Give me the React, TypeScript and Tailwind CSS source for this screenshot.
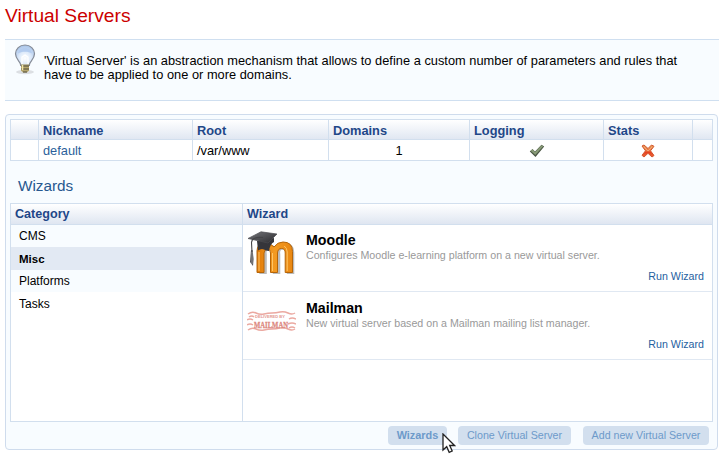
import React from "react";

const headGradient = "bg-linear-to-b from-white to-[#dfe6f1]";

function Bulb() {
  return (
    <svg width="22" height="32" viewBox="0 0 22 32" className="block">
      <defs>
        <radialGradient id="glass" cx="50%" cy="65%" r="65%">
          <stop offset="0" stopColor="#ffffff" />
          <stop offset="0.5" stopColor="#dce9fa" />
          <stop offset="1" stopColor="#a3c0e6" />
        </radialGradient>
      </defs>
      <ellipse cx="11" cy="28" rx="9" ry="2.2" fill="#dcdfe3" />
      <path d="M11 1C5.500 1 1.500 5 1.500 9.800c0 4 2.200 6 4.100 8.500.8 1.100 1 1.700 1 3h8.800c0-1.300.2-1.900 1-3 1.900-2.500 4.100-4.500 4.100-8.500C20.500 5 16.500 1 11 1z" fill="url(#glass)" stroke="#858b96" strokeWidth="1.200" />
      <path d="M4 9.500C5 2.300 17 2.300 18 9.500c-3-2.500-11-2.500-14 0z" fill="#b3ccef" />
      <path d="M8 20V13l3-2 3 2v7" fill="none" stroke="#fff" strokeWidth="1.200" />
      <path d="M7 20.500h8v6l-2 2H9l-2-2z" fill="#b5a66d" />
      <path d="M7 22h8M7 25h8M9 28h4" stroke="#4e4a3e" strokeWidth="1.200" />
      <path d="M8.500 21v5" stroke="#f2e6a8" strokeWidth="1.500" />
    </svg>
  );
}

function Check() {
  return (
    <svg width="16" height="14" viewBox="0 0 16 14" className="block">
      <path d="M.8 7.500L3.500 5 6 7.500 12.500.8 15.200 2.500 6.500 13z" fill="#4a5544" />
      <path d="M1.500 6.800L3.500 5.300 6 8 12.500 1.200 14.300 2.200 6.300 11z" fill="#879a76" />
    </svg>
  );
}

function Cross() {
  return (
    <svg width="14" height="14" viewBox="0 0 14 14" className="block">
      <defs>
        <linearGradient id="cross" x2="0" y2="1">
          <stop offset="0" stopColor="#e8a25c" />
          <stop offset="0.5" stopColor="#e8743d" />
          <stop offset="0.600" stopColor="#e5401f" />
          <stop offset="1" stopColor="#ec6a3c" />
        </linearGradient>
      </defs>
      <path d="M1 2L3 1 7 4.500 10.500 1 13 2.300 9.500 6.800 13 11.500 11 13 7 9.300 3 13 1 11.300 4.500 6.800z" fill="url(#cross)" stroke="#d4572f" strokeWidth="1" />
      <path d="M3 3l4 4 4-4" fill="none" stroke="#f5b184" strokeWidth=".8" />
    </svg>
  );
}

function MoodleLogo() {
  return (
    <svg width="49" height="46" viewBox="0 0 49 46" className="block">
      <defs>
        <linearGradient id="orange" x2="1" y2="0">
          <stop offset="0" stopColor="#e17b08" />
          <stop offset="0.500" stopColor="#f39a22" />
          <stop offset="1" stopColor="#e98711" />
        </linearGradient>
        <linearGradient id="cap" x2="1" y2="1">
          <stop offset="0" stopColor="#77777b" />
          <stop offset="1" stopColor="#29292d" />
        </linearGradient>
      </defs>
      <path d="M10.500 42V20q0-8 8.500-8 5 0 8.500 4 3.500-5 9-5 9 0 9 9.500V42h-7.500V22q0-4.500-3.700-4.500T31.500 22v20H24V22q0-4-3.500-4T18 22v20z" fill="#555" opacity=".4" transform="translate(1.800 2)" />
      <path d="M10 42.500V21q0-8 8.500-8 5 0 8.500 4 3.500-5 9-5 9.500 0 9.500 9.500v21h-7.300V23q0-4.500-3.700-4.500T30.500 23v19.500h-7V23q0-4-3-4T17 23v19.500z" fill="url(#orange)" stroke="#b66508" strokeWidth="1" />
      <path d="M12 41V22M25.500 41V23M40.200 41V22q0-4-3-6" fill="none" stroke="#ffc566" strokeWidth="1" />
      <path d="M10 11l1 9.500q4-3 8 0l3 .5q1-7 5-9V8z" fill="#35353a" />
      <path d="M1 8.500L14 1.800l16 2.200-9 9z" fill="url(#cap)" stroke="#4b4b4f" strokeWidth=".7" />
      <path d="M16 7.500Q5 6.500 4.500 12.500L5 22" fill="none" stroke="#454548" strokeWidth="1.100" />
      <path d="M4 20l-1 12 3 4 .6-7-1-9z" fill="#55555a" />
      <path d="M5 22v12" stroke="#aaa" strokeWidth=".7" />
    </svg>
  );
}

function MailmanLogo() {
  return (
    <svg width="49" height="23" viewBox="0 0 49 23" className="block">
      <g fill="none" stroke="#eba9a1" strokeWidth="1.500">
        <path d="M1 4q4-3 8-1t8 1 8-1 8-1 8 1 7 0" />
        <path d="M0 10q3-2 6 0M0 15q3-2 6 0M42 9q3-2 7 0M41 14q4-2 8 0" />
        <path d="M1 20q4-3 8-1t8 1 8-1 8-1 8 1 7 0" />
        <path d="M2 7q3-2 5 0M42 18q3-2 6 0" />
      </g>
      <text x="8" y="7.500" textLength="30" lengthAdjust="spacingAndGlyphs" fontSize="3.500" className="font-['Liberation_Sans',sans-serif] font-bold" fill="#e39a92">DELIVERED BY</text>
      <text x="7" y="17.500" textLength="34" lengthAdjust="spacingAndGlyphs" fontSize="8.500" className="font-['Liberation_Serif',serif] font-bold" fill="#dc8880" stroke="#dc8880" strokeWidth=".3">MAILMAN</text>
    </svg>
  );
}

function Cursor() {
  return (
    <svg width="14" height="21" viewBox="0 0 14 21" className="block">
      <path d="M1 1v16l3.700-3.300 2.500 5.600 3-1.300-2.500-5.500H12.500z" fill="#fff" stroke="#222" strokeWidth="1.300" />
    </svg>
  );
}

function Wizard({ logo, name, text }: { logo: React.ReactNode; name: string; text: string }) {
  return (
    <div className="flex h-[68px] border-b border-[#e0e8f2] pl-[4px]">
      <div className="w-[59px] shrink-0">{logo}</div>
      <div className="flex grow flex-col pt-[8px] pr-2">
        <div className="h-[17px] text-[14.200px] leading-[17px] font-bold text-black">{name}</div>
        <div className="h-[13px] text-[10.670px] leading-[13px] text-[#999]">{text}</div>
        <a className="mt-[8px] self-end text-[10.670px] leading-[13px] text-[#265f9f]">Run Wizard</a>
      </div>
    </div>
  );
}

const columns = "grid grid-cols-[28px_154px_136px_141px_134px_89px_20px]";

export default function App() {
  return (
    <div className="h-[456px] w-[724px] overflow-hidden bg-white pl-[5px] font-['Liberation_Sans',Arial,sans-serif] text-black">
      <h1 className="h-[39px] pt-[4px] text-[19.200px] leading-[23px] text-[#cc0000]">Virtual Servers</h1>

      <div className="flex h-[62px] w-[714px] border-y border-[#cfdff0] bg-[#f8fcff] pt-[4px] pl-[9px]">
        <Bulb />
        <p className="pt-[10px] pl-[8px] text-[12.800px] leading-[14px] tracking-[0.023px] whitespace-nowrap">
          'Virtual Server' is an abstraction mechanism that allows to define a custom number of parameters and rules that
          <br />
          have to be applied to one or more domains.
        </p>
      </div>

      <div className="mt-[13px] flex h-[336px] w-[713px] flex-col rounded-[4px] border border-[#cfdced] bg-[#f8fcff] px-[4px] pt-[4px]">
        <div className="w-[703px] border-t border-l border-[#d2dfee] text-[12.800px]">
          <div className={`${columns} h-[20px] ${headGradient} leading-[17px] font-bold text-[#1f4788] *:border-r *:border-b *:border-[#d2dfee] *:pt-[2px] *:pl-[4px]`}>
            <div />
            <div>Nickname</div>
            <div>Root</div>
            <div>Domains</div>
            <div>Logging</div>
            <div>Stats</div>
            <div />
          </div>
          <div className={`${columns} h-[21px] bg-white leading-[18px] *:border-r *:border-b *:border-[#d2dfee] *:pt-[2px]`}>
            <div />
            <div className="pl-[4px] text-[#2c5f9a]">default</div>
            <div className="pl-[4px]">/var/www</div>
            <div className="text-center">1</div>
            <div className="flex items-center justify-center">
              <Check />
            </div>
            <div className="flex items-center justify-center">
              <Cross />
            </div>
            <div />
          </div>
        </div>

        <h2 className="h-[42px] pt-[16px] pl-[8px] text-[15.300px] leading-[18px] text-[#28588f]">Wizards</h2>

        <div className="flex h-[219px] w-[703px] border border-[#d2dfee] bg-white">
          <div className="w-[232px] shrink-0 border-r border-[#d2dfee] text-[12px] leading-[22px]">
            <div className={`h-[21px] border-b border-[#d2dfee] ${headGradient} pl-[4px] text-[12.600px] leading-[21px] font-bold text-[#1f4788]`}>Category</div>
            <div className="h-[22px] bg-[#f8fcff] pl-[8px]">CMS</div>
            <div className="h-[23px] bg-[#e2e9f3] pl-[8px] text-[11.500px] leading-[24px] font-bold">Misc</div>
            <div className="h-[22px] bg-[#f8fcff] pl-[8px]">Platforms</div>
            <div className="h-[22px] pl-[8px] leading-[24px]">Tasks</div>
          </div>
          <div className="grow">
            <div className={`h-[21px] border-b border-[#d2dfee] ${headGradient} pl-[4px] text-[12.600px] leading-[21px] font-bold text-[#1f4788]`}>Wizard</div>
            <div className="-mt-px">
              <Wizard logo={<div className="pt-[6px]"><MoodleLogo /></div>} name="Moodle" text="Configures Moodle e-learning platform on a new virtual server." />
              <Wizard logo={<div className="pt-[18px]"><MailmanLogo /></div>} name="Mailman" text="New virtual server based on a Mailman mailing list manager." />
            </div>
          </div>
        </div>

        <div className="flex justify-end gap-[12px] pt-[4px] pr-[4px] text-center text-[10.670px] leading-[19px] text-[#6d9aca]">
          <div className="relative -mr-px h-[19px] w-[59px] rounded-[4px] bg-[#d2dfee] text-[10.900px] font-bold">
            Wizards
            <div className="absolute top-[7px] left-[54px]">
              <Cursor />
            </div>
          </div>
          <div className="h-[19px] w-[113px] rounded-[4px] bg-[#d2dfee]">Clone Virtual Server</div>
          <div className="h-[19px] w-[126px] rounded-[4px] bg-[#d2dfee]">Add new Virtual Server</div>
        </div>
      </div>
    </div>
  );
}
